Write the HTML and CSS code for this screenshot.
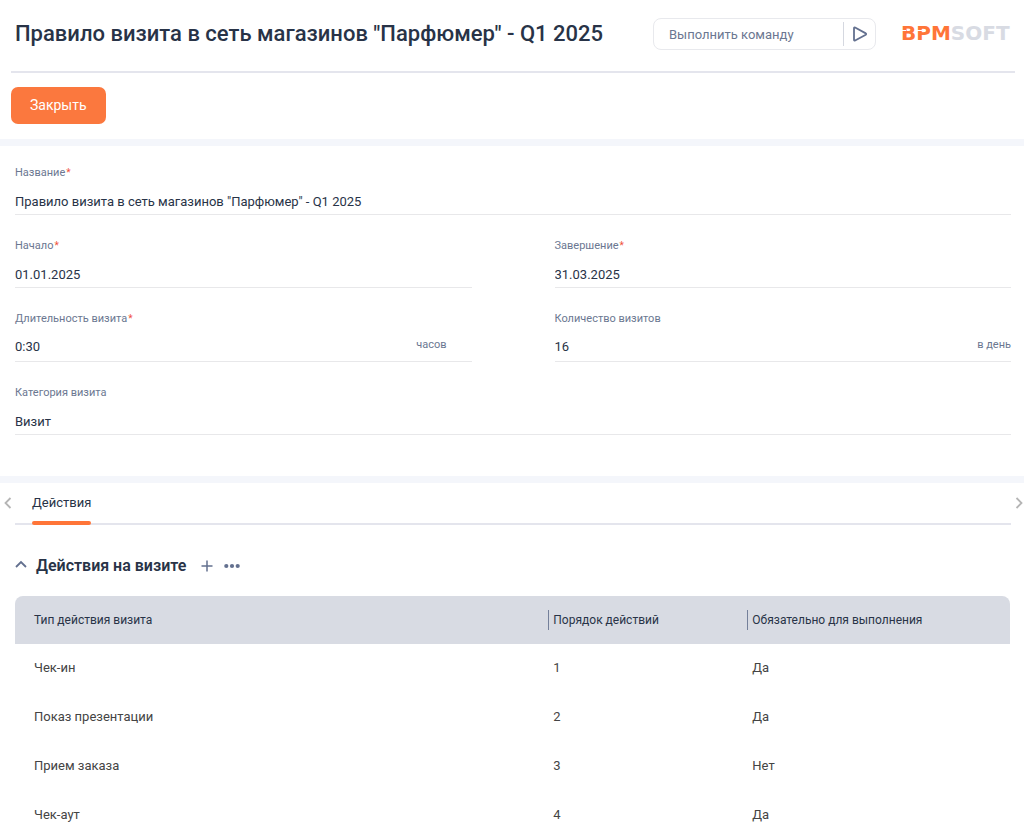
FILE: index.html
```
<!DOCTYPE html>
<html lang="ru">
<head>
<meta charset="utf-8">
<meta name="viewport" content="width=device-width, initial-scale=1">
<title>Правило визита</title>
<link rel="stylesheet" href="styles.css">
</head>
<body>
<header class="header">
  <div class="header-top">
    <h1 class="title">Правило визита в сеть магазинов "Парфюмер" - Q1 2025</h1>
    <form class="command">
      <input class="command-input" type="text" placeholder="Выполнить команду" aria-label="Выполнить команду">
      <button class="command-run" type="button" aria-label="Запустить">
        <svg width="16" height="16" viewBox="0 0 16 16"><path d="M2 2.200v11.600c0 .7.5 1 1.100.7L13.800 8.700c.5-.3.5-1 0-1.300L3.100 1.500C2.500 1.200 2 1.500 2 2.200z" fill="none" stroke="#63708f" stroke-width="1.800" stroke-linejoin="round"/></svg>
      </button>
    </form>
    <a class="logo" href="#" aria-label="BPMSoft">
      <svg width="114" height="28" viewBox="0 0 114 28">
        <text class="logo-text" x="0" y="20"><tspan fill="#ff7538">BPM</tspan><tspan fill="#d8dbe3">SOFT</tspan></text>
        <path d="M0 10.500h5M16 10.500h5" stroke="#fff" stroke-width="1"/>
      </svg>
    </a>
  </div>
  <div class="actions"><button class="close" type="button">Закрыть</button></div>
</header>

<main>
  <form class="fields">
    <div class="field wide">
      <label for="name">Название<span class="req">*</span></label>
      <div class="control"><input id="name" type="text" value='Правило визита в сеть магазинов "Парфюмер" - Q1 2025'></div>
    </div>
    <div class="field">
      <label for="start">Начало<span class="req">*</span></label>
      <div class="control"><input id="start" type="text" value="01.01.2025"></div>
    </div>
    <div class="field">
      <label for="end">Завершение<span class="req">*</span></label>
      <div class="control"><input id="end" type="text" value="31.03.2025"></div>
    </div>
    <div class="field">
      <label for="duration">Длительность визита<span class="req">*</span></label>
      <div class="control measured inset"><input id="duration" type="text" value="0:30"><span class="unit">часов</span></div>
    </div>
    <div class="field">
      <label for="count">Количество визитов</label>
      <div class="control measured"><input id="count" type="text" value="16"><span class="unit">в день</span></div>
    </div>
    <div class="field wide">
      <label for="category">Категория визита</label>
      <div class="control"><input id="category" type="text" value="Визит"></div>
    </div>
  </form>

  <section class="details">
    <nav class="tabs">
      <button class="scroll" type="button" aria-label="Назад"><svg width="8" height="12" viewBox="0 0 8 12"><path d="M6.500 1L1.500 6l5 5" fill="none" stroke="#b5b5b5" stroke-width="1.800"/></svg></button>
      <div class="tab-list"><button class="tab" type="button">Действия</button></div>
      <button class="scroll next" type="button" aria-label="Вперёд"><svg width="8" height="12" viewBox="0 0 8 12"><path d="M1.500 1l5 5-5 5" fill="none" stroke="#b5b5b5" stroke-width="1.800"/></svg></button>
    </nav>

    <div class="group">
      <button class="icon" type="button" aria-label="Свернуть"><svg width="12" height="12" viewBox="0 0 12 12"><path d="M1 7L6 2l5 5" fill="none" stroke="#63708f" stroke-width="1.800"/></svg></button>
      <h2 class="group-title">Действия на визите</h2>
      <button class="icon" type="button" aria-label="Добавить"><svg width="12" height="12" viewBox="0 0 12 12"><path d="M6 .5v11M.5 6h11" stroke="#63708f" stroke-width="1.500"/></svg></button>
      <button class="icon" type="button" aria-label="Ещё"><svg width="16" height="12" viewBox="0 0 16 12" fill="#63708f"><circle cx="2.300" cy="6" r="2.100"/><circle cx="8" cy="6" r="2.100"/><circle cx="13.700" cy="6" r="2.100"/></svg></button>
    </div>

    <table class="grid">
      <thead><tr><th class="col-type">Тип действия визита</th><th class="col-order"><span class="split">Порядок действий</span></th><th><span class="split">Обязательно для выполнения</span></th></tr></thead>
      <tbody>
        <tr><td>Чек-ин</td><td>1</td><td>Да</td></tr>
        <tr><td>Показ презентации</td><td>2</td><td>Да</td></tr>
        <tr><td>Прием заказа</td><td>3</td><td>Нет</td></tr>
        <tr><td>Чек-аут</td><td>4</td><td>Да</td></tr>
      </tbody>
    </table>
  </section>
</main>
</body>
</html>
```
FILE: styles.css
```
* { box-sizing: border-box; }
body {
  margin: 0;
  background: #fff;
  color: #283347;
  font: 13px/20px Roboto, "Liberation Sans", sans-serif;
}
button, input { font: inherit; color: inherit; border: 0; padding: 0; background: none; }
input { outline: 0; }
svg { display: block; }
.header { border-bottom: 7px solid #f4f6fb; }
.header-top {
  display: flex;
  align-items: center;
  height: 73px;
  margin: 0 9px 0 11px;
  padding: 0 0 3px 4px;
  border-bottom: 2px solid #e4e5ed;
}
.title { flex: 1; margin: 0; font-size: 22px; line-height: 32px; font-weight: 500; white-space: nowrap; }
.command {
  display: flex;
  align-items: center;
  width: 223px;
  height: 32px;
  margin-right: 25px;
  border: 1px solid #e8e9ed;
  border-radius: 8px;
}
.command-input { flex: 1; min-width: 0; padding: 2px 0 0 15px; }
.command-input::placeholder { color: #6b7791; opacity: 1; }
.command-run {
  display: grid;
  place-items: center;
  width: 32px;
  height: 24px;
  border-left: 1px solid #d5d8e0;
}
.logo-text { font: bold 20px "DejaVu Sans", sans-serif; }
.actions { padding: 14px 11px 15px; }
.close {
  display: block;
  height: 37px;
  padding: 0 19px 2px;
  border-radius: 7px;
  background: #fb783e;
  color: #fff;
  font-size: 14px;
}
.fields {
  display: grid;
  grid-template-columns: 1fr 1fr;
  column-gap: 83px;
  row-gap: 23px;
  padding: 19px 13px 41px 15px;
  border-bottom: 7px solid #f4f6fb;
}
.wide { grid-column: 1 / -1; }
.field label { display: block; font-size: 11px; line-height: 16px; color: #6b7791; }
.req { margin-left: 1px; font-size: 10px; color: #f0523d; }
.control { display: flex; align-items: center; height: 34px; padding-top: 10px; padding-bottom: 2px; border-bottom: 1px solid #e8e8ea; }
.measured { height: 35px; padding-bottom: 4px; }
.inset { padding-right: 25px; }
.control input { flex: 1; min-width: 0; height: 20px; }
.unit { padding-bottom: 4px; font-size: 11px; line-height: 16px; color: #6b7791; }
.tabs { display: flex; height: 42px; padding: 0 1px 0 4px; }
.scroll { display: flex; align-items: center; height: 40px; width: 11px; }
.next { width: 12px; justify-content: flex-end; }
.tab-list { flex: 1; padding-left: 17px; border-bottom: 2px solid #e4e5ed; }
.tab { position: relative; height: 40px; }
.tab::after {
  content: "";
  position: absolute;
  left: 0;
  right: 0;
  bottom: -2px;
  height: 4px;
  border-radius: 2px;
  background: #ff7538;
}
.group { display: flex; align-items: center; padding: 29px 15px 18px; }
.group-title { margin: 0 15px 0 9px; font-size: 16px; line-height: 24px; font-weight: 600; }
.icon + .icon { margin-left: 11px; }
.grid { width: calc(100% - 29px); margin: 0 14px 0 15px; table-layout: fixed; border-collapse: separate; border-spacing: 0; }
.grid th { height: 48px; padding: 0 0 0 19px; text-align: left; font-size: 12px; font-weight: 400; background: #d8dbe3; }
.grid th:first-child { border-top-left-radius: 8px; }
.grid th:last-child { border-top-right-radius: 8px; }
.grid th + th { padding-left: 0; }
.grid td { height: 49px; padding: 0 0 1px 19px; color: #444; }
.grid td + td { padding-left: 5px; }
.col-type { width: 53.6%; }
.col-order { width: 20%; }
.split { display: block; padding-left: 4px; border-left: 1px solid #74809a; }
```
